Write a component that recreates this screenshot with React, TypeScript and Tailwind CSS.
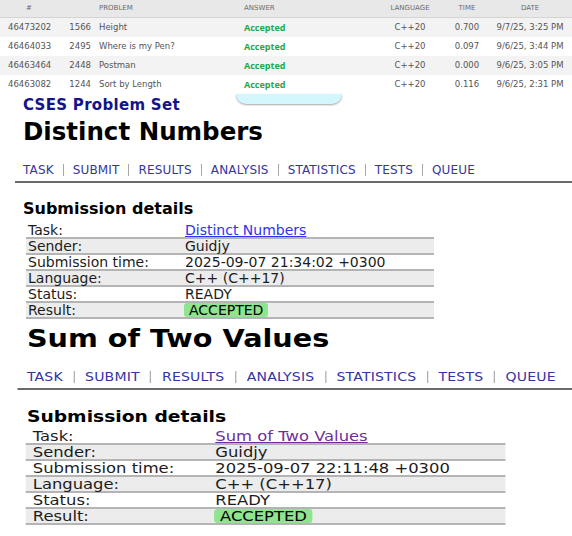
import React from "react";

const runs = [
  { id: "46473202", pid: "1566", name: "Height", time: "0.700", date: "9/7/25, 3:25 PM" },
  { id: "46464033", pid: "2495", name: "Where is my Pen?", time: "0.097", date: "9/6/25, 3:44 PM" },
  { id: "46463464", pid: "2448", name: "Postman", time: "0.000", date: "9/6/25, 3:05 PM" },
  { id: "46463082", pid: "1244", name: "Sort by Length", time: "0.116", date: "9/6/25, 2:31 PM" },
];

const cols = "grid grid-cols-[58px_33px_153px_136px_60px_54px_72px] items-center";

function RunsTable() {
  return (
    <div className="font-['DejaVu_Sans',sans-serif] text-[#555]">
      <div className={`${cols} h-[18px] bg-[#e8e8e8] border-b border-[#d4d4d4] text-[7px] text-[#6a6a6a] uppercase`}>
        <div className="pl-[8px]"><span className="block w-[42px] text-center">#</span></div>
        <div />
        <div className="pl-[8px]">Problem</div>
        <div>Answer</div>
        <div className="text-center">Language</div>
        <div className="text-center">Time</div>
        <div className="text-center">Date</div>
      </div>
      {runs.map((r, i) => (
        <div key={r.id} className={`${cols} h-[19px] text-[8.5px] ${i % 2 === 0 ? "bg-[#f3f3f3]" : "bg-white"}`}>
          <div className="pl-[8px]">{r.id}</div>
          <div className="text-right">{r.pid}</div>
          <div className="pl-[8px]">{r.name}</div>
          <div className="font-['Open_Sans',sans-serif] text-[9px] font-bold text-[#1fa84a]">Accepted</div>
          <div className="text-center">C++20</div>
          <div className="text-center">{r.time}</div>
          <div className="text-center whitespace-nowrap">{r.date}</div>
        </div>
      ))}
    </div>
  );
}

const navItems = ["TASK", "SUBMIT", "RESULTS", "ANALYSIS", "STATISTICS", "TESTS", "QUEUE"];

interface SubmissionProps {
  title: string;
  linkClass: string;
  time: string;
  headTop: string;
  tableTop: string;
  tableEdge: string;
  labelCol: string;
}

function Submission({ title, linkClass, time, headTop, tableTop, tableEdge, labelCol }: SubmissionProps) {
  const rows: [string, React.ReactNode][] = [
    ["Task:", <span className={`underline ${linkClass}`}>{title}</span>],
    ["Sender:", "Guidjy"],
    ["Submission time:", time],
    ["Language:", "C++ (C++17)"],
    ["Status:", "READY"],
    [
      "Result:",
      <span className="inline-block h-[14px] leading-[14px] px-[5px] -ml-px rounded-[3px] bg-[#8fe48f] text-black">ACCEPTED</span>,
    ],
  ];

  return (
    <div className="font-['DejaVu_Sans',Verdana,sans-serif]">
      <h1 className="pl-[23px] text-[24.5px] leading-[28px] font-bold text-black">{title}</h1>

      {/* nav */}
      <div className="mt-[17px] pl-[23px] flex items-center text-[12px] leading-[14px] tracking-[0.15px] text-[#3434a2]">
        {navItems.map((item, i) => (
          <React.Fragment key={item}>
            {i > 0 && <span className="mx-[9px] w-px h-[12px] bg-[#a8a8a8]" />}
            <span>{item}</span>
          </React.Fragment>
        ))}
      </div>
      <div className="mt-[4px] ml-[15px] h-[2px] bg-[#6a6a6a]" />

      <h2 className={`${headTop} pl-[23px] text-[16px] leading-[18px] font-bold text-black`}>Submission details</h2>

      <div className={`${tableTop} ${tableEdge} text-[14px] leading-[14px] text-[#1c1c1c]`}>
        {rows.map(([label, value], i) => (
          <div
            key={label}
            className={`flex h-[16px] border-b-2 border-[#b4b4b4] ${i % 2 === 1 ? "bg-[#ececec]" : "bg-white"}`}
          >
            <div className={`${labelCol} shrink-0`}>{label}</div>
            <div className="pl-[2px] whitespace-nowrap">{value}</div>
          </div>
        ))}
      </div>
    </div>
  );
}

export default function App() {
  return (
    <div className="relative w-[572px] h-[536px] overflow-hidden bg-white">
      <RunsTable />

      {/* tooltip tail from the picture above */}
      <div className="absolute top-[94px] left-[236px] w-[106px] h-[10px] rounded-b-[10px] bg-[#d3f7fc] shadow-[0_1px_2px_rgba(0,0,0,0.35)]" />

      <div className="mt-[3px] pl-[23px] font-['DejaVu_Sans',Verdana,sans-serif] text-[15px] leading-[16px] tracking-[0.3px] font-bold text-[#14148a]">
        CSES Problem Set
      </div>

      <div className="mt-[5px]">
        <Submission
          title="Distinct Numbers"
          linkClass="text-[#3131ee] decoration-[#3131ee]"
          time="2025-09-07 21:34:02 +0300"
          headTop="mt-[17px]"
          tableTop="mt-[5px]"
          tableEdge="ml-[26px] w-[408px]"
          labelCol="w-[157px] pl-[2px]"
        />
      </div>

      <div className="mt-[6px] origin-left scale-x-[1.17]">
        <Submission
          title="Sum of Two Values"
          linkClass="text-[#6e2f9e] decoration-[#6e2f9e]"
          time="2025-09-07 22:11:48 +0300"
          headTop="mt-[18px]"
          tableTop="mt-[3px]"
          tableEdge="ml-[22px] w-[410px]"
          labelCol="w-[160px] pl-[6px]"
        />
      </div>
    </div>
  );
}
